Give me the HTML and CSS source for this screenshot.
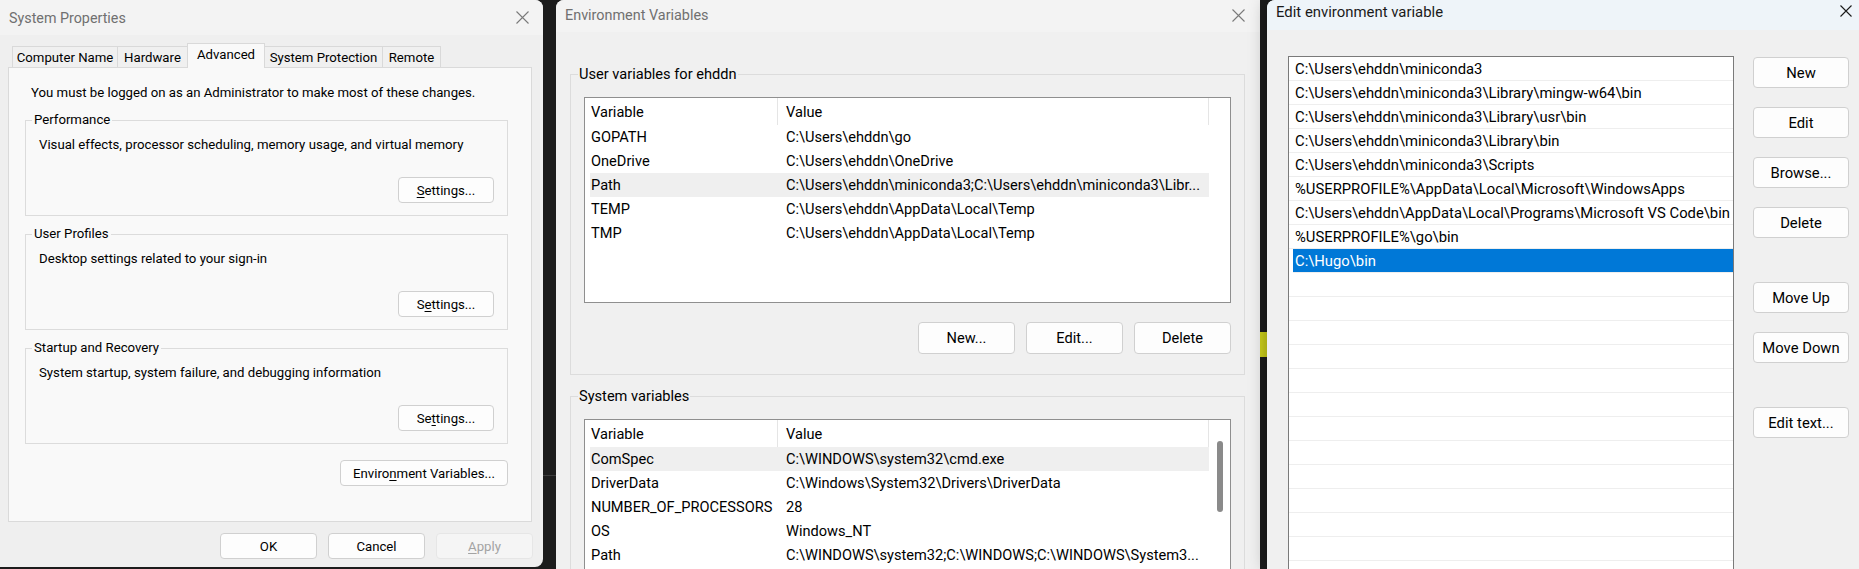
FILE: index.html
```html
<!DOCTYPE html>
<html lang="en">
<head>
<meta charset="utf-8">
<title>Environment Variables</title>
<link rel="stylesheet" href="styles.css">
</head>
<body>
<div class="desktop">
  <div class="deco-line"></div>
  <div class="deco-yellow"></div>

  <section class="win win-sys">
    <header class="tb tb-sys">
      <span class="tb-title">System Properties</span>
      <svg class="xicon" width="13" height="13" viewBox="0 0 13 13"><path d="M0.5 0.5L12.5 12.5M12.5 0.5L0.5 12.5" stroke="#7a7a7a" stroke-width="1.1" fill="none"/></svg>
    </header>
    <div class="sys-body">
      <div class="tabs">
        <div class="tab t-cn">Computer Name</div>
        <div class="tab t-hw">Hardware</div>
        <div class="tab t-adv active">Advanced</div>
        <div class="tab t-sp">System Protection</div>
        <div class="tab t-rm">Remote</div>
      </div>
      <div class="panel">
        <p class="admin">You must be logged on as an Administrator to make most of these changes.</p>
        <fieldset class="grp">
          <legend>Performance</legend>
          <div class="grp-in">
            <p>Visual effects, processor scheduling, memory usage, and virtual memory</p>
            <div class="grp-act"><button class="btn btn-sm"><u>S</u>ettings...</button></div>
          </div>
        </fieldset>
        <fieldset class="grp">
          <legend>User Profiles</legend>
          <div class="grp-in">
            <p>Desktop settings related to your sign-in</p>
            <div class="grp-act"><button class="btn btn-sm">S<u>e</u>ttings...</button></div>
          </div>
        </fieldset>
        <fieldset class="grp">
          <legend>Startup and Recovery</legend>
          <div class="grp-in">
            <p>System startup, system failure, and debugging information</p>
            <div class="grp-act"><button class="btn btn-sm">Se<u>t</u>tings...</button></div>
          </div>
        </fieldset>
        <button class="btn btn-env">Enviro<u>n</u>ment Variables...</button>
      </div>
      <div class="sys-foot">
        <button class="btn btn-foot">OK</button>
        <button class="btn btn-foot">Cancel</button>
        <button class="btn btn-foot dis"><u>A</u>pply</button>
      </div>
    </div>
  </section>

  <section class="win win-env">
    <header class="tb tb-env">
      <span class="tb-title">Environment Variables</span>
      <svg class="xicon" width="13" height="13" viewBox="0 0 13 13"><path d="M0.5 0.5L12.5 12.5M12.5 0.5L0.5 12.5" stroke="#7a7a7a" stroke-width="1.1" fill="none"/></svg>
    </header>
    <div class="env-body">
      <fieldset class="grp2">
        <legend>User variables for ehddn</legend>
        <div class="grp2-in">
          <div class="lv">
            <div class="lv-main">
              <div class="lv-head"><div class="c1">Variable</div><div class="c2">Value</div></div>
              <div class="lv-row"><div class="c1">GOPATH</div><div class="c2">C:\Users\ehddn\go</div></div>
              <div class="lv-row"><div class="c1">OneDrive</div><div class="c2">C:\Users\ehddn\OneDrive</div></div>
              <div class="lv-row hl"><div class="c1">Path</div><div class="c2">C:\Users\ehddn\miniconda3;C:\Users\ehddn\miniconda3\Libr...</div></div>
              <div class="lv-row"><div class="c1">TEMP</div><div class="c2">C:\Users\ehddn\AppData\Local\Temp</div></div>
              <div class="lv-row"><div class="c1">TMP</div><div class="c2">C:\Users\ehddn\AppData\Local\Temp</div></div>
            </div>
            <div class="lv-sb"></div>
          </div>
          <div class="btnrow">
            <button class="btn btn-md">New...</button>
            <button class="btn btn-md">Edit...</button>
            <button class="btn btn-md">Delete</button>
          </div>
        </div>
      </fieldset>
      <fieldset class="grp2 sysvars">
        <legend>System variables</legend>
        <div class="grp2-in">
          <div class="lv lv-tall">
            <div class="lv-main">
              <div class="lv-head"><div class="c1">Variable</div><div class="c2">Value</div></div>
              <div class="lv-row hl"><div class="c1">ComSpec</div><div class="c2">C:\WINDOWS\system32\cmd.exe</div></div>
              <div class="lv-row"><div class="c1">DriverData</div><div class="c2">C:\Windows\System32\Drivers\DriverData</div></div>
              <div class="lv-row"><div class="c1">NUMBER_OF_PROCESSORS</div><div class="c2">28</div></div>
              <div class="lv-row"><div class="c1">OS</div><div class="c2">Windows_NT</div></div>
              <div class="lv-row"><div class="c1">Path</div><div class="c2">C:\WINDOWS\system32;C:\WINDOWS;C:\WINDOWS\System3...</div></div>
            </div>
            <div class="lv-sb"><div class="sb-thumb"></div></div>
          </div>
        </div>
      </fieldset>
    </div>
  </section>

  <section class="win win-edit">
    <header class="tb tb-edit">
      <span class="tb-title">Edit environment variable</span>
      <svg class="xicon xicon-edit" width="12" height="12" viewBox="0 0 12 12"><path d="M0.5 0.5L11.5 11.5M11.5 0.5L0.5 11.5" stroke="#1a1a1a" stroke-width="1.1" fill="none"/></svg>
    </header>
    <div class="edit-body">
      <div class="pl">
        <div class="pl-row">C:\Users\ehddn\miniconda3</div>
        <div class="pl-row">C:\Users\ehddn\miniconda3\Library\mingw-w64\bin</div>
        <div class="pl-row">C:\Users\ehddn\miniconda3\Library\usr\bin</div>
        <div class="pl-row">C:\Users\ehddn\miniconda3\Library\bin</div>
        <div class="pl-row">C:\Users\ehddn\miniconda3\Scripts</div>
        <div class="pl-row">%USERPROFILE%\AppData\Local\Microsoft\WindowsApps</div>
        <div class="pl-row">C:\Users\ehddn\AppData\Local\Programs\Microsoft VS Code\bin</div>
        <div class="pl-row">%USERPROFILE%\go\bin</div>
        <div class="pl-row sel">C:\Hugo\bin</div>
        <div class="pl-row"></div>
        <div class="pl-row"></div>
        <div class="pl-row"></div>
        <div class="pl-row"></div>
        <div class="pl-row"></div>
        <div class="pl-row"></div>
        <div class="pl-row"></div>
        <div class="pl-row"></div>
        <div class="pl-row"></div>
        <div class="pl-row"></div>
        <div class="pl-row"></div>
        <div class="pl-row"></div>
        <div class="pl-row"></div>
      </div>
      <div class="pl-btns">
        <button class="btn btn-lg">New</button>
        <button class="btn btn-lg">Edit</button>
        <button class="btn btn-lg">Browse...</button>
        <button class="btn btn-lg">Delete</button>
        <button class="btn btn-lg gap-more">Move Up</button>
        <button class="btn btn-lg">Move Down</button>
        <button class="btn btn-lg gap-more">Edit text...</button>
      </div>
    </div>
  </section>
</div>
</body>
</html>
```

FILE: styles.css
```css
* { box-sizing: border-box; }
html, body { margin: 0; padding: 0; }
body {
  background: #1c1c1c;
  font-family: Roboto, "Liberation Sans", Arial, sans-serif;
  color: #000;
}
.desktop {
  position: relative;
  width: 1859px;
  height: 569px;
  overflow: hidden;
  background: #1c1c1c;
}
.deco-line {
  position: absolute;
  left: 543px; top: 475px;
  width: 13px; height: 1px;
  background: #3c3c3c;
}
.deco-yellow {
  position: absolute;
  left: 1260px; top: 332px;
  width: 7px; height: 25px;
  background: #cdd01a;
}

/* windows */
.win {
  position: absolute;
  top: 0;
  overflow: hidden;
  display: flex;
  flex-direction: column;
}
.win-sys {
  left: 0;
  width: 543px;
  height: 567px;
  background: #efefef;
  border-radius: 0 8px 8px 0;
  font-size: 13.2px;
}
.win-env {
  left: 556px;
  width: 704px;
  height: 569px;
  background: #f0f0f0;
  border-radius: 8px 0 0 0;
  font-size: 14.6px;
}
.win-edit {
  left: 1267px;
  width: 592px;
  height: 569px;
  background: #f0f0f0;
  border-radius: 8px 0 0 0;
  font-size: 14.8px;
  box-shadow: 0 0 18px rgba(0, 0, 0, 0.35);
}

/* title bars */
.tb {
  display: flex;
  align-items: center;
  justify-content: space-between;
  flex: none;
  white-space: nowrap;
}
.tb-sys {
  height: 35px;
  background: #f3f3f3;
  padding: 0 14px 0 9px;
  color: #707070;
  font-size: 14.3px;
}
.tb-env {
  height: 32px;
  background: #f3f3f3;
  padding: 0 15px 2px 9px;
  color: #707070;
  font-size: 14.4px;
}
.tb-edit {
  height: 30px;
  background: #eef4f9;
  padding: 0 7px 6px 9px;
  color: #1a1a1a;
  font-size: 14.9px;
}
.xicon { display: block; flex: none; }
.xicon-edit { margin-top: -3px; }

/* buttons */
.btn {
  font: inherit;
  color: #000;
  background: #fdfdfd;
  border: 1px solid #d0d0d0;
  border-radius: 4px;
  padding: 0;
  display: flex;
  align-items: center;
  justify-content: center;
  white-space: nowrap;
  flex: none;
}
.btn u { text-underline-offset: 2px; }
.btn-sm { width: 96px; height: 26px; }
.btn-env { width: 168px; height: 26px; margin-top: 16px; align-self: flex-end; }
.btn-foot { width: 97px; height: 26px; }
.btn.dis { color: #a3a3a3; background: #f5f5f5; border-color: #e6e6e6; }
.btn-md { width: 97px; height: 32px; }
.btn-lg { width: 96px; height: 31px; }

/* system properties */
.sys-body {
  padding: 0 11px 0 8px;
  display: flex;
  flex-direction: column;
}
.tabs {
  display: flex;
  align-items: flex-end;
  padding-left: 4px;
  margin-top: 8px;
}
.tab {
  height: 21px;
  border: 1px solid #d9d9d9;
  border-bottom: 0;
  background: #f0f0f0;
  display: flex;
  align-items: center;
  justify-content: center;
  margin-left: -1px;
  white-space: nowrap;
}
.tab:first-child { margin-left: 0; }
.tab.active {
  height: 25px;
  margin-bottom: -1px;
  padding-bottom: 3px;
  background: #f9f9f9;
  position: relative;
  z-index: 1;
}
.t-cn { width: 106px; }
.t-hw { width: 71px; }
.t-adv { width: 78px; }
.t-sp { width: 119px; }
.t-rm { width: 59px; }

.panel {
  height: 455px;
  background: #f9f9f9;
  border: 1px solid #dadada;
  padding: 17px 23px 0 16px;
  display: flex;
  flex-direction: column;
}
.admin { margin: 0 0 0 6px; line-height: 16px; white-space: nowrap; }
.grp {
  margin: 10px 0 0;
  padding: 0;
  border: 1px solid #dcdcdc;
  min-width: 0;
}
.admin + .grp { margin-top: 11px; }
.grp legend { margin-left: 6px; padding: 0 2px; line-height: 16px; }
.grp-in {
  padding: 9px 13px 12px 13px;
  display: flex;
  flex-direction: column;
}
.grp-in p { margin: 0; line-height: 16px; white-space: nowrap; }
.grp-act { display: flex; justify-content: flex-end; margin-top: 24px; }
.sys-foot {
  display: flex;
  justify-content: flex-end;
  gap: 11px;
  margin: 11px -1px 0 0;
}

/* environment variables */
.env-body { padding: 0 15px 0 14px; }
.grp2 {
  margin: 34px 0 0;
  padding: 0;
  border: 1px solid #dcdcdc;
  min-width: 0;
}
.grp2.sysvars { margin-top: 13px; }
.grp2 legend { margin-left: 7px; padding: 0 1px; line-height: 16px; }
.grp2-in { padding: 15px 13px 20px; }
.lv {
  display: flex;
  height: 206px;
  border: 1px solid #8f8f8f;
  background: #fff;
}
.lv-tall { height: 200px; }
.lv-main { width: 624px; padding-left: 5px; flex: none; }
.lv-sb { flex: 1; }
.lv-head, .lv-row { display: flex; width: 619px; }
.lv-head { height: 27px; }
.lv-head .c1, .lv-head .c2 {
  border-right: 1px solid #e5e5e5;
  display: flex;
  align-items: center;
}
.lv-row { height: 24px; align-items: center; }
.lv-row.hl { background: #efefef; }
.c1 { width: 188px; flex: none; padding-left: 1px; white-space: nowrap; }
.c2 { flex: 1; padding-left: 8px; white-space: nowrap; overflow: hidden; }
.sb-thumb {
  width: 6px;
  height: 71px;
  margin: 21px 0 0 8px;
  background: #8a8a8a;
  border-radius: 3px;
}
.btnrow {
  display: flex;
  justify-content: flex-end;
  gap: 11px;
  margin-top: 19px;
}

/* edit environment variable */
.edit-body {
  display: flex;
  gap: 19px;
  padding: 26px 10px 0 21px;
}
.pl {
  width: 446px;
  height: 560px;
  border: 1px solid #7a7a7a;
  background: #fff;
  flex: none;
}
.pl-row {
  height: 24px;
  border-bottom: 1px solid #eeeeee;
  padding: 2px 0 0 6px;
  line-height: 21px;
  white-space: nowrap;
}
.pl-row.sel {
  margin-left: 4px;
  padding-left: 2px;
  background: #0078d7;
  color: #fff;
}
.pl-btns {
  display: flex;
  flex-direction: column;
  gap: 19px;
  width: 96px;
  padding-top: 1px;
}
.gap-more { margin-top: 25px; }
```
